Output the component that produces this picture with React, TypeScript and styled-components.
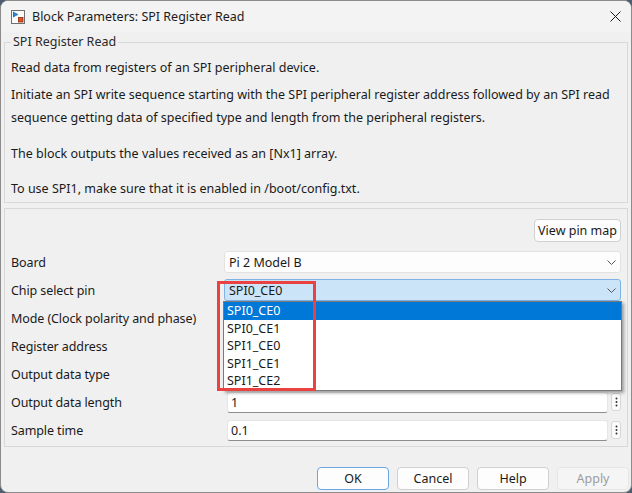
import React from "react";
import styled, { createGlobalStyle } from "styled-components";

const GlobalStyle = createGlobalStyle`
  html, body {
    margin: 0;
    padding: 0;
    background: #4b5d6e;
  }
  * {
    box-sizing: border-box;
  }
`;

const FONT = `"Noto Sans", "Open Sans", Arial, sans-serif`;

type Param =
  | { label: string; kind: "combo"; value: string; open?: boolean }
  | { label: string; kind: "edit"; value: string };

// rows sitting under the open list show no value
const params: Param[] = [
  { label: "Board", kind: "combo", value: "Pi 2 Model B" },
  { label: "Chip select pin", kind: "combo", value: "SPI0_CE0", open: true },
  { label: "Mode (Clock polarity and phase)", kind: "combo", value: "" },
  { label: "Register address", kind: "edit", value: "" },
  { label: "Output data type", kind: "combo", value: "" },
  { label: "Output data length", kind: "edit", value: "1" },
  { label: "Sample time", kind: "edit", value: "0.1" },
];

const chipSelectOptions = ["SPI0_CE0", "SPI0_CE1", "SPI1_CE0", "SPI1_CE1", "SPI1_CE2"];

export default function App() {
  return (
    <>
      <GlobalStyle />
      <Window>
        <TitleBar>
          <BlockIcon />
          <Title>Block Parameters: SPI Register Read</Title>
          <CloseButton aria-label="Close">
            <svg width="11" height="11" viewBox="0 0 11 11">
              <path d="M0.5 0.5 L10.5 10.5 M10.5 0.5 L0.5 10.5" stroke="#1b1b1b" strokeWidth="1" />
            </svg>
          </CloseButton>
        </TitleBar>

        <Body>
          <GroupBox>
            <Legend>SPI Register Read</Legend>
            <Paragraph>Read data from registers of an SPI peripheral device.</Paragraph>
            <Paragraph $gap={4}>
              Initiate an SPI write sequence starting with the SPI peripheral register address followed by an SPI read
              <br />
              sequence getting data of specified type and length from the peripheral registers.
            </Paragraph>
            <Paragraph $gap={13}>The block outputs the values received as an [Nx1] array.</Paragraph>
            <Paragraph $gap={12}>To use SPI1, make sure that it is enabled in /boot/config.txt.</Paragraph>
          </GroupBox>

          <ParamPanel>
            <PinMapRow>
              <SmallButton>View pin map</SmallButton>
            </PinMapRow>
            <ParamGrid>
              {params.map((p) => (
                <React.Fragment key={p.label}>
                  <Label>{p.label}</Label>
                  {p.kind === "combo" ? (
                    <ComboCell>
                      <Combo $active={!!p.open}>
                        <span>{p.value}</span>
                        <Chevron />
                      </Combo>
                      {p.open && (
                        <>
                          <DropList>
                            {chipSelectOptions.map((o) => (
                              <DropItem key={o} $selected={o === p.value}>
                                {o}
                              </DropItem>
                            ))}
                          </DropList>
                          <Callout />
                        </>
                      )}
                    </ComboCell>
                  ) : (
                    <EditCell>
                      <EditField>{p.value}</EditField>
                      <MoreButton>
                        <svg width="3" height="10" viewBox="0 0 3 10">
                          <circle cx="1.5" cy="1.5" r="1" fill="#333" />
                          <circle cx="1.5" cy="5" r="1" fill="#333" />
                          <circle cx="1.5" cy="8.5" r="1" fill="#333" />
                        </svg>
                      </MoreButton>
                    </EditCell>
                  )}
                </React.Fragment>
              ))}
            </ParamGrid>
          </ParamPanel>
        </Body>

        <Footer>
          <DialogButton $primary>OK</DialogButton>
          <DialogButton>Cancel</DialogButton>
          <DialogButton>Help</DialogButton>
          <DialogButton disabled>Apply</DialogButton>
        </Footer>
      </Window>
    </>
  );
}

function BlockIcon() {
  return (
    <IconBox width="14" height="14" viewBox="0 0 14 14">
      <rect x="0.5" y="0.5" width="13" height="13" fill="#fafafa" stroke="#6f6f6f" />
      <path d="M2.5 1.8 V7.2 M2.5 2.2 L6.8 4.5 L2.5 6.8 Z" fill="#2b86d6" stroke="#1e6fb8" strokeWidth="0.8" />
      <rect x="7.5" y="7.5" width="4.5" height="4.5" fill="#e8501e" stroke="#8a2f10" strokeWidth="0.8" />
    </IconBox>
  );
}

function Chevron() {
  return (
    <ChevronSvg width="9" height="5" viewBox="0 0 9 5">
      <path d="M0.5 0.5 L4.5 4.5 L8.5 0.5" fill="none" stroke="#555" strokeWidth="1" />
    </ChevronSvg>
  );
}

const Window = styled.div`
  position: relative;
  width: 632px;
  height: 493px;
  background: #f0f0f0;
  border: 1px solid #8c8c8c;
  border-radius: 8px;
  overflow: hidden;
  display: flex;
  flex-direction: column;
  font-family: ${FONT};
  font-size: 12.5px;
  color: #1a1a1a;
`;

const TitleBar = styled.div`
  height: 31px;
  flex: none;
  display: flex;
  align-items: center;
  padding: 0 9px 0 10px;
  background: #f3f3f3;
`;

const IconBox = styled.svg`
  flex: none;
  margin-right: 7px;
`;

const Title = styled.div`
  font-size: 12.5px;
  color: #1b1b1b;
`;

const CloseButton = styled.div`
  margin-left: auto;
  display: flex;
  align-items: center;
  padding-right: 1px;
`;

const Body = styled.div`
  padding: 0 3px;
`;

const GroupBox = styled.fieldset`
  margin: 0;
  padding: 0 6px 2px 6px;
  border: 1px solid #d8d8d8;
  min-width: 0;
`;

const Legend = styled.legend`
  padding: 0 2px;
  margin-left: 0;
  line-height: 20px;
  color: #2a2a2a;
`;

const Paragraph = styled.p<{ $gap?: number }>`
  margin: ${(p) => p.$gap ?? 4}px 0 0 0;
  line-height: 23px;
  white-space: nowrap;
`;

const ParamPanel = styled.div`
  margin-top: 5px;
  height: 239px;
  border: 1px solid #d8d8d8;
  padding: 10px 6px 0 6px;
`;

const PinMapRow = styled.div`
  display: flex;
  justify-content: flex-end;
`;

const SmallButton = styled.div`
  height: 23px;
  padding: 0 3px;
  display: flex;
  align-items: center;
  background: #fdfdfd;
  border: 1px solid #d0d0d0;
  border-radius: 4px;
`;

const ParamGrid = styled.div`
  margin-top: 6px;
  display: grid;
  grid-template-columns: 213px 1fr;
  grid-auto-rows: 28px;
  align-items: center;
`;

const Label = styled.div`
  white-space: nowrap;
  letter-spacing: -0.1px;
`;

const ComboCell = styled.div`
  position: relative;
`;

const Combo = styled.div<{ $active: boolean }>`
  height: 22px;
  display: flex;
  align-items: center;
  padding: 0 0 0 4px;
  border-radius: 3px;
  background: ${(p) => (p.$active ? "#cce4f7" : "#fdfdfd")};
  border: 1px solid ${(p) => (p.$active ? "#7fb3e6" : "#e2e2e2")};
  span {
    flex: 1;
  }
`;

const ChevronSvg = styled.svg`
  margin-right: 4px;
`;

const DropList = styled.div`
  position: absolute;
  top: 22px;
  left: -1px;
  right: -1px;
  z-index: 2;
  background: #fff;
  border: 1px solid #7a7a7a;
  box-shadow: 2px 2px 3px rgba(0, 0, 0, 0.35);
`;

const DropItem = styled.div<{ $selected: boolean }>`
  height: 17.6px;
  line-height: 17.6px;
  padding-left: 3px;
  background: ${(p) => (p.$selected ? "#0078d7" : "transparent")};
  color: ${(p) => (p.$selected ? "#fff" : "#1a1a1a")};
`;

const Callout = styled.div`
  position: absolute;
  top: 2px;
  left: -7px;
  width: 99px;
  height: 110px;
  z-index: 3;
  border: 3px solid #ea4141;
  pointer-events: none;
`;

const EditCell = styled.div`
  display: flex;
  align-items: center;
  gap: 3px;
  padding-left: 3px;
`;

const EditField = styled.div`
  flex: 1;
  height: 21px;
  display: flex;
  align-items: center;
  padding-left: 3px;
  background: #fff;
  border: 1px solid #e6e6e6;
  border-bottom-color: #8d8d8d;
  border-radius: 3px;
`;

const MoreButton = styled.div`
  width: 10px;
  height: 18px;
  display: flex;
  align-items: center;
  justify-content: center;
  background: #fbfbfb;
  border: 1px solid #d6d6d6;
  border-radius: 3px;
`;

const Footer = styled.div`
  flex: 1;
  display: flex;
  justify-content: flex-end;
  align-items: flex-start;
  gap: 8px;
  padding: 20px 2px 0 0;
`;

const DialogButton = styled.div<{ $primary?: boolean; disabled?: boolean }>`
  width: 72px;
  height: 23px;
  display: flex;
  align-items: center;
  justify-content: center;
  border-radius: 4px;
  background: ${(p) => (p.disabled ? "#f5f5f5" : "#fdfdfd")};
  border: 1px solid ${(p) => (p.$primary ? "#6aa7e0" : p.disabled ? "#e6e6e6" : "#d0d0d0")};
  color: ${(p) => (p.disabled ? "#9d9d9d" : "#1a1a1a")};
`;
